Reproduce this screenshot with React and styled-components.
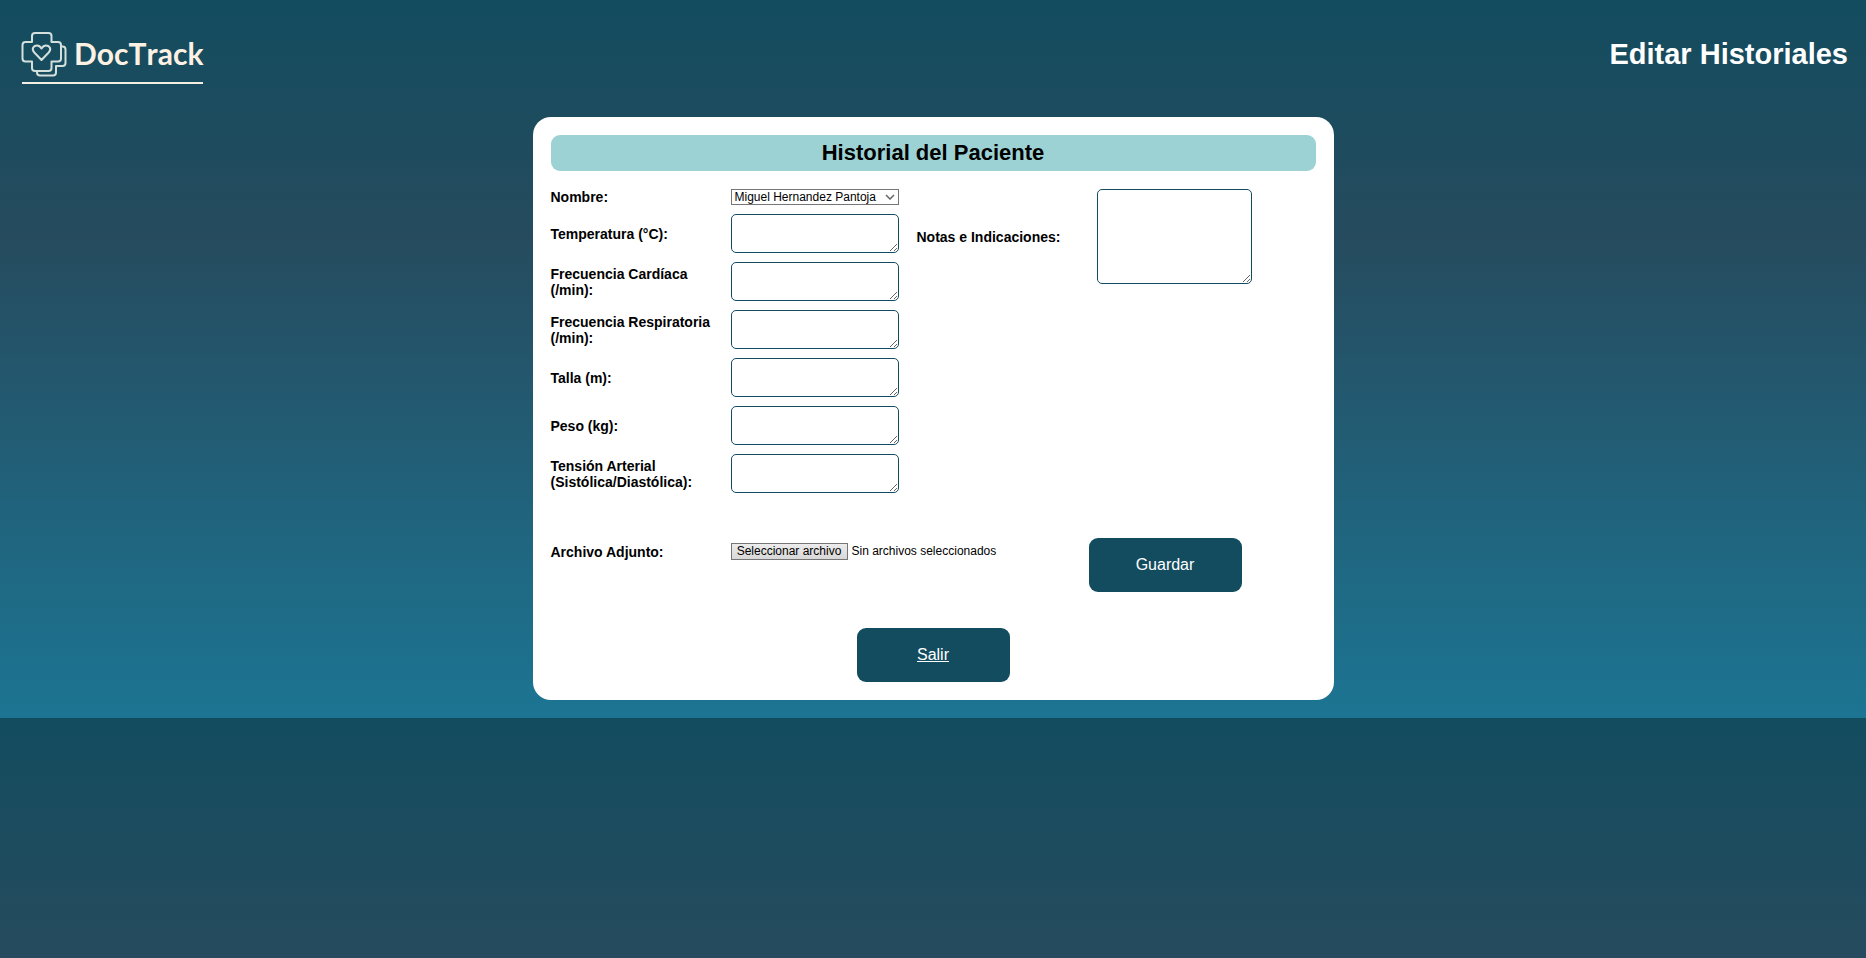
import React from 'react';
import styled, { createGlobalStyle } from 'styled-components';

const GlobalStyle = createGlobalStyle`
  *, *::before, *::after { box-sizing: border-box; }
  body {
    margin: 0;
    font-family: Arial, "Liberation Sans", sans-serif;
    color: #000;
    background: linear-gradient(#134c5f, #264b5e 33%, #1c7593);
  }
`;

const Header = styled.header`
  display: flex;
  justify-content: space-between;
  align-items: flex-start;
  padding: 28px 18px 29px 20px;
`;

const Logo = styled.svg`
  display: block;
  width: 186px;
  height: 60px;
`;

const PageTitle = styled.h1`
  margin: 8px 0 0;
  font-size: 29px;
  line-height: 36px;
  color: #fff;
`;

const Main = styled.main`
  display: flex;
  justify-content: center;
  padding: 0 18px 18px;
`;

const Card = styled.form`
  display: flex;
  flex-direction: column;
  width: 100%;
  max-width: 801px;
  padding: 18px;
  background: #fff;
  border-radius: 18px;
`;

const CardTitle = styled.h2`
  margin: 0 0 18px;
  font-size: 22px;
  line-height: 36px;
  text-align: center;
  background: #9cd2d3;
  border-radius: 9px;
`;

const Columns = styled.div`
  display: grid;
  grid-template-columns: 348px 1fr;
  gap: 18px;
  align-items: start;
`;

const Fields = styled.div`
  display: flex;
  flex-direction: column;
  gap: 9px;
`;

const Field = styled.div`
  display: grid;
  grid-template-columns: 162px ${(p) => p.$control || '168px'};
  column-gap: 18px;
  align-items: center;
`;

const Label = styled.label`
  font-size: 14px;
  font-weight: bold;
  line-height: 16px;
`;

const Select = styled.select`
  appearance: none;
  width: 100%;
  height: 16px;
  padding: 0 20px 0 3px;
  font: 12px/14px Arial, "Liberation Sans", sans-serif;
  color: #000;
  background: #fff;
  border: 1px solid #767676;
  border-radius: 0;
  grid-area: 1 / 1;
`;

const SelectBox = styled.div`
  display: grid;
  align-items: center;
`;

const Chevron = styled.svg`
  grid-area: 1 / 1;
  justify-self: end;
  width: 10px;
  height: 6px;
  margin-right: 4px;
  pointer-events: none;
`;

const TextArea = styled.textarea`
  display: block;
  width: 100%;
  height: ${(p) => (p.$tall ? '95px' : '39px')};
  padding: 9px;
  font: 12px/14px Arial, "Liberation Sans", sans-serif;
  background: #fff;
  border: 1px solid #134c5f;
  border-radius: 5px;
  resize: both;
`;

const Attachments = styled.div`
  display: grid;
  grid-template-columns: 538px 1fr;
  align-items: start;
  margin-top: 45px;
`;

const AttachmentField = styled(Field)`
  padding-top: 5px;
`;

const FileRow = styled.div`
  display: grid;
  align-items: center;
`;

const FileInput = styled.input`
  grid-area: 1 / 1;
  width: 100%;
  height: 17px;
  opacity: 0;
`;

const FileFace = styled.span`
  grid-area: 1 / 1;
  display: flex;
  align-items: center;
  gap: 4px;
  font-size: 12px;
  line-height: 15px;
  pointer-events: none;
`;

const FileButton = styled.span`
  width: 117px;
  text-align: center;
  white-space: nowrap;
  background: linear-gradient(#ececec, #d8d8d8);
  border: 1px solid #767676;
`;

const buttonLook = `
  display: block;
  width: 153px;
  height: 54px;
  padding: 0;
  font: 16px/54px Arial, "Liberation Sans", sans-serif;
  text-align: center;
  color: #fff;
  background: #134c5f;
  border: 0;
  border-radius: 9px;
`;

const SaveButton = styled.button`
  ${buttonLook}
`;

const ExitLink = styled.a`
  ${buttonLook}
  align-self: center;
  margin-top: 36px;
  text-decoration: underline;
`;

const Wordmark = styled.text`
  font-family: Lato, sans-serif;
  font-size: 30px;
  font-weight: 700;
  font-kerning: none;
  fill: #fdf1e4;
`;

const vitals = [
  ['temperatura', 'Temperatura (°C):'],
  ['cardiaca', 'Frecuencia Cardíaca (/min):'],
  ['respiratoria', 'Frecuencia Respiratoria (/min):'],
  ['talla', 'Talla (m):'],
  ['peso', 'Peso (kg):'],
  ['tension', 'Tensión Arterial (Sistólica/Diastólica):'],
];

function DocTrackLogo() {
  return (
    <Logo viewBox="0 0 186 60" role="img" aria-label="DocTrack">
      <g fill="none" stroke="#d3e0dc" strokeWidth="2" strokeLinejoin="round" strokeLinecap="round">
        <path d="M15 5h13.500a3 3 0 0 1 3 3v6H38a3 3 0 0 1 3 3v13.500a3 3 0 0 1-3 3h-6.500V40a3 3 0 0 1-3 3H15a3 3 0 0 1-3-3v-6.500H5.500a3 3 0 0 1-3-3V17a3 3 0 0 1 3-3H12V8a3 3 0 0 1 3-3z" />
        <path d="M41 18.500h1.500a3 3 0 0 1 3 3V35a3 3 0 0 1-3 3H36v6.500a3 3 0 0 1-3 3H20a3 3 0 0 1-3-3V43" />
        <path d="M21.500 32L14.300 24.500C10.800 20.500 14 17.500 17 17.500c2.200 0 3.500 1.300 4.500 3 1-1.700 2.300-3 4.500-3 3 0 6.200 3 2.700 7z" />
      </g>
      <Wordmark x="54" y="37">DocTrack</Wordmark>
      <rect x="2" y="54" width="181" height="2" fill="#f5efe3" />
    </Logo>
  );
}

export default function App() {
  return (
    <>
      <GlobalStyle />
      <Header>
        <DocTrackLogo />
        <PageTitle>Editar Historiales</PageTitle>
      </Header>
      <Main>
        <Card onSubmit={(e) => e.preventDefault()}>
          <CardTitle>Historial del Paciente</CardTitle>
          <Columns>
            <Fields>
              <Field>
                <Label htmlFor="nombre">Nombre:</Label>
                <SelectBox>
                  <Select id="nombre">
                    <option>Miguel Hernandez Pantoja</option>
                  </Select>
                  <Chevron viewBox="0 0 10 6" aria-hidden="true">
                    <path d="M1 1l4 4 4-4" fill="none" stroke="#666" strokeWidth="1.500" />
                  </Chevron>
                </SelectBox>
              </Field>
              {vitals.map(([id, text]) => (
                <Field key={id}>
                  <Label htmlFor={id}>{text}</Label>
                  <TextArea id={id} />
                </Field>
              ))}
            </Fields>
            <Field $control="155px">
              <Label htmlFor="notas">Notas e Indicaciones:</Label>
              <TextArea id="notas" $tall />
            </Field>
          </Columns>
          <Attachments>
            <AttachmentField $control="1fr">
              <Label htmlFor="archivo">Archivo Adjunto:</Label>
              <FileRow>
                <FileInput id="archivo" type="file" />
                <FileFace aria-hidden="true">
                  <FileButton>Seleccionar archivo</FileButton>
                  Sin archivos seleccionados
                </FileFace>
              </FileRow>
            </AttachmentField>
            <SaveButton type="submit">Guardar</SaveButton>
          </Attachments>
          <ExitLink href="#salir">Salir</ExitLink>
        </Card>
      </Main>
    </>
  );
}
